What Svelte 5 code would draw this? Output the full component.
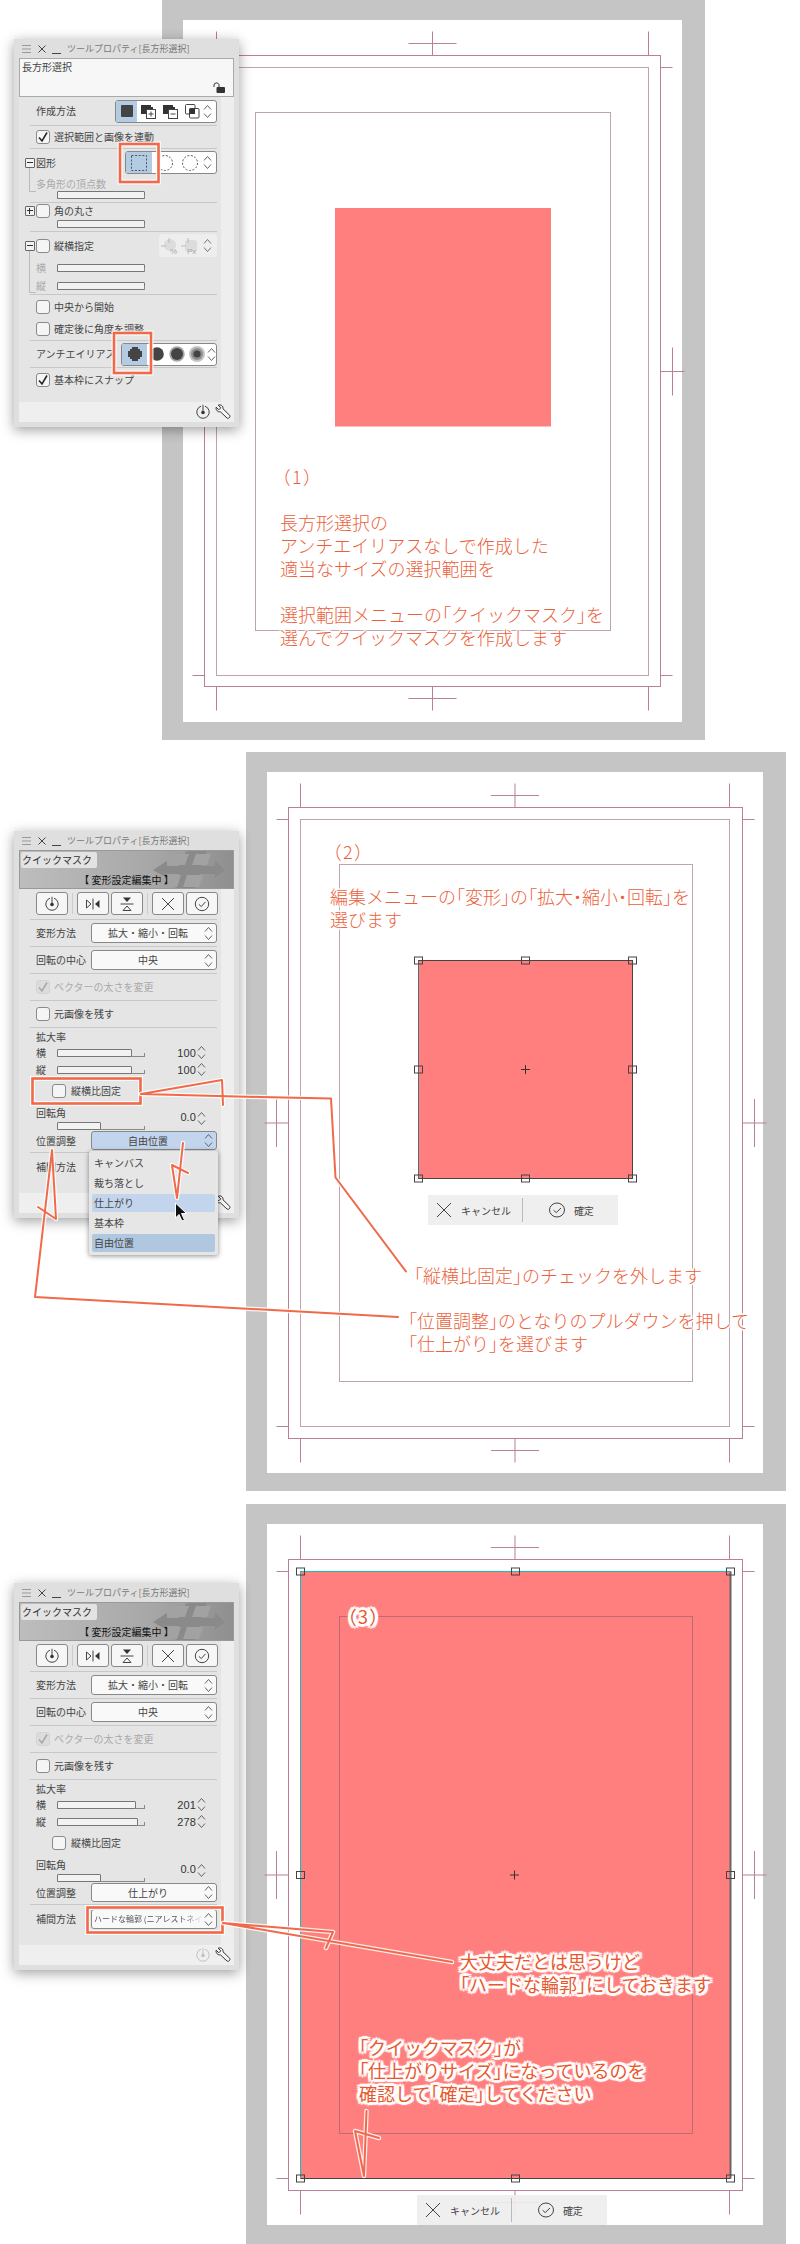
<script>
  const bar = (t) => {
    const out = [];
    for (const part of t.split(/([「」・])/)) {
      if (part) out.push({ s: part, b: /^[「」・]$/.test(part) });
    }
    return out;
  };

  function marks(o, i) {
    const cx = (i.x0 + i.x1) / 2, cy = (i.y0 + i.y1) / 2;
    const L = [];
    for (const x of [i.x0, i.x1]) {
      L.push([x, o.y0 - 24, x, o.y0], [x, o.y1, x, o.y1 + 24]);
    }
    for (const y of [i.y0, i.y1]) {
      L.push([o.x0 - 12, y, o.x0, y], [o.x1, y, o.x1 + 12, y]);
    }
    L.push([cx - 24, o.y0 - 12, cx + 24, o.y0 - 12], [cx, o.y0 - 24, cx, o.y0]);
    L.push([cx - 24, o.y1 + 12, cx + 24, o.y1 + 12], [cx, o.y1, cx, o.y1 + 24]);
    L.push([o.x0 - 12, cy - 24, o.x0 - 12, cy + 24], [o.x0 - 24, cy, o.x0, cy]);
    L.push([o.x1 + 12, cy - 24, o.x1 + 12, cy + 24], [o.x1, cy, o.x1 + 24, cy]);
    return L;
  }

  function handles(r) {
    const mx = (r.x0 + r.x1) / 2, my = (r.y0 + r.y1) / 2;
    return [[r.x0, r.y0], [mx, r.y0], [r.x1, r.y0], [r.x0, my], [r.x1, my], [r.x0, r.y1], [mx, r.y1], [r.x1, r.y1]];
  }

  const stages = [
    {
      top: 0, h: 746,
      gray: { x0: 162, y0: 0, x1: 705, y1: 740 },
      white: { x0: 183, y0: 20, x1: 682, y1: 722 },
      outer: { x0: 204.5, y0: 55.5, x1: 660.5, y1: 686.5 },
      inner: { x0: 216.5, y0: 67.5, x1: 648.5, y1: 675.5 },
      basic: { x0: 255.5, y0: 112.5, x1: 610.5, y1: 630.5 },
      pink: { x0: 335, y0: 208, x1: 551, y1: 426.5 }
    },
    {
      top: 746, h: 754,
      gray: { x0: 246, y0: 752, x1: 786, y1: 1491 },
      white: { x0: 267, y0: 772, x1: 763, y1: 1473 },
      outer: { x0: 288.5, y0: 807.5, x1: 742.5, y1: 1438.5 },
      inner: { x0: 300.5, y0: 819.5, x1: 729.5, y1: 1426.5 },
      basic: { x0: 339.5, y0: 864.5, x1: 692.5, y1: 1381.5 },
      pink: { x0: 418.5, y0: 960.5, x1: 632.5, y1: 1178.5 }
    },
    {
      top: 1500, h: 744,
      gray: { x0: 246, y0: 1504, x1: 786, y1: 2244 },
      white: { x0: 267, y0: 1524, x1: 763, y1: 2225 },
      outer: { x0: 288.5, y0: 1559.5, x1: 742.5, y1: 2190.5 },
      inner: { x0: 300.5, y0: 1571.5, x1: 729.5, y1: 2178.5 },
      basic: { x0: 339.5, y0: 1616.5, x1: 692.5, y1: 2133.5 },
      pink: { x0: 300.5, y0: 1571.5, x1: 730.5, y1: 2178.5 }
    }
  ];

  const notes = [
    [
      { x: 281, y: 476, l: ['（1）'], paren: true },
      { x: 280, y: 522, l: ['長方形選択の', 'アンチエイリアスなしで作成した', '適当なサイズの選択範囲を', ' ', '選択範囲メニューの「クイックマスク」を', '選んでクイックマスクを作成します'] }
    ],
    [
      { x: 332, y: 851.5, l: ['（2）'], paren: true },
      { x: 330, y: 896.5, l: ['編集メニューの「変形」の「拡大・縮小・回転」を', '選びます'] },
      { x: 414, y: 1275, l: ['「縦横比固定」のチェックを外します'] },
      { x: 408, y: 1320.5, l: ['「位置調整」のとなりのプルダウンを押して', '「仕上がり」を選びます'] }
    ],
    [
      { x: 347, y: 1616, l: ['（3）'], thick: true, paren: true },
      { x: 460, y: 1961, l: ['大丈夫だとは思うけど', '「ハードな輪郭」にしておきます'], thick: true },
      { x: 359, y: 2047, l: ['「クイックマスク」が', '「仕上がりサイズ」になっているのを', '確認して「確定」してください'], thick: true }
    ]
  ];

  const strokes = [
    {
      boxes: [[120, 144, 38.5, 38], [114, 333, 37, 40]],
      lines: []
    },
    {
      boxes: [[32.5, 1078.5, 108, 25]],
      lines: [
        '223,1105 222,1080 141,1094 260,1097 331,1098.5 335.5,1177.5 406,1271.5',
        '38,1207 56,1219 52,1150 35,1297 398,1317',
        '183,1143 177,1198 172,1165 188,1173'
      ]
    },
    {
      boxes: [[87.5, 1907.5, 135, 25]],
      lines: [
        '326,1948 333,1932 223,1923 452,1962',
        '366.5,2111 364,2176 355,2131 379,2138'
      ]
    }
  ];

  const tools = ['reset', 'fliph', 'flipv', 'x', 'ok'];
</script>

{#snippet spin()}
  <svg class="spin" viewBox="0 0 9 17" width="9" height="17"><path d="M1 6.5 4.5 2.5 8 6.5M1 10.5 4.5 14.5 8 10.5" /></svg>
{/snippet}

{#snippet checkbox(on, off)}
  <span class="box" class:off>
    {#if on}
      <svg viewBox="0 0 14 14" width="14" height="14"><path d="M3 7.5 6 11 11 2.5" /></svg>
    {/if}
  </span>
{/snippet}

{#snippet slider(pct)}
  <span class="slider"><span class="fill" style="width:{pct}%"></span></span>
{/snippet}

{#snippet reset(pale)}
  <svg class="icon" class:pale viewBox="0 0 16 16" width="16" height="16"><path d="M6 2.2A6.2 6.2 0 1 0 10 2.2M8 .8V8" /><circle cx="8" cy="8.5" r="1.8" class="solid" /></svg>
{/snippet}

{#snippet wrench()}
  <svg class="icon wrench" viewBox="0 0 16 16" width="16" height="16"><path d="M1.2 3.2 3.8 5.8 5.8 3.8 3.2 1.2C5.6.2 8.4 1.8 8 4.8L14.6 11.2C15.8 12.6 13.9 15.2 12 14L5.4 7.8C2.8 8.4.4 5.8 1.2 3.2Z" /></svg>
{/snippet}

{#snippet titlebar()}
  <div class="title">
    <svg viewBox="0 0 42 12" width="42" height="12"><path class="burger" d="M0 2.5H9M0 6H9M0 9.5H9" /><path class="dark" d="M16.5 2.5 23.5 9.5M23.5 2.5 16.5 9.5M30 10.5H39" /></svg>
    <span>ツールプロパティ[長方形選択]</span>
  </div>
{/snippet}

{#snippet footer(pale)}
  <div class="foot">
    {@render reset(pale)}
    {@render wrench()}
  </div>
{/snippet}

{#snippet select(text, cls)}
  <div class="select {cls}"><span class="val">{text}</span>{@render spin()}</div>
{/snippet}

{#snippet transform(sx, fx, sy, fy, pos, posClass, interp)}
  {@render titlebar()}
  <div class="banner">
    <svg class="art" viewBox="0 0 215 39" width="215" height="39" aria-hidden="true">
      <path d="M134 20 148 11V16H160L168 0H188L183 16H196V11L206 20 196 28V24H181L176 39H156L160 24H148V28Z" />
      <path class="tile" d="M155 4 170 4 166 15 150 15ZM177 4 192 4 188 15 173 15ZM147 25 162 25 158 37 143 37ZM168 25 184 25 180 37 164 37Z" />
    </svg>
    <div class="tab">クイックマスク</div>
    <div class="cap">【 変形設定編集中 】</div>
  </div>
  <div class="body">
    <div class="row line h31 tools">
      {#each tools as t, i}
        <span class="tool" class:sep={i === 1 || i === 3}>
          {#if t === 'reset'}
            {@render reset(false)}
          {:else if t === 'fliph'}
            <svg class="icon" viewBox="0 0 16 16" width="16" height="16"><path d="M1.5 4V12L6 8ZM8 2.5V13.5" /><path class="solid" d="M14.5 4V12L10 8Z" /></svg>
          {:else if t === 'flipv'}
            <svg class="icon" viewBox="0 0 16 16" width="16" height="16"><path class="solid" d="M4 1.5H12L8 6Z" /><path d="M1.5 8H14.5M4 14.5H12L8 10Z" /></svg>
          {:else if t === 'x'}
            <svg class="icon" viewBox="0 0 16 16" width="16" height="16"><path d="M2 2 14 14M14 2 2 14" /></svg>
          {:else}
            <svg class="icon" viewBox="0 0 16 16" width="16" height="16"><circle cx="8" cy="8" r="6.7" /><path d="M4.8 8.3 7.3 10.6 11.5 5.8" /></svg>
          {/if}
        </span>
      {/each}
    </div>
    <div class="row line h27"><span class="lbl w55">変形方法</span>{@render select('拡大・縮小・回転', '')}</div>
    <div class="row line h27"><span class="lbl w55">回転の中心</span>{@render select('中央', '')}</div>
    <div class="row line h27 check">{@render checkbox(true, true)}<span class="lbl dim">ベクターの太さを変更</span></div>
    <div class="row line h27 check">{@render checkbox(false, false)}<span class="lbl">元画像を残す</span></div>
    <div class="row h17"><span class="lbl">拡大率</span></div>
    <div class="row h15"><span class="lbl w21">横</span>{@render slider(sx)}<span class="num">{fx}</span>{@render spin()}</div>
    <div class="row h15 gap2"><span class="lbl w21">縦</span>{@render slider(sy)}<span class="num">{fy}</span>{@render spin()}</div>
    <div class="row h28 ratio">{@render checkbox(false, false)}<span class="lbl">縦横比固定</span></div>
    <div class="row h24 rot">
      <div class="stack"><span class="lbl">回転角</span><span class="indent">{@render slider(50)}</span></div>
      <span class="num">0.0</span>{@render spin()}
    </div>
    <div class="row line h24"><span class="lbl w55">位置調整</span>{@render select(pos, posClass)}</div>
    <div class="row h28 last"><span class="lbl w55">補間方法</span>{@render select(interp, 'tiny')}</div>
  </div>
{/snippet}

<main class="page">
  {#each stages as s, n}
    <section class="stage" style="height:{s.h}px">
      <svg class="layer" viewBox="0 {s.top} 800 {s.h}" width="800" height={s.h} aria-hidden="true">
        <rect class="gray" x={s.gray.x0} y={s.gray.y0} width={s.gray.x1 - s.gray.x0} height={s.gray.y1 - s.gray.y0} />
        <rect class="paper" x={s.white.x0} y={s.white.y0} width={s.white.x1 - s.white.x0} height={s.white.y1 - s.white.y0} />
        {#each marks(s.outer, s.inner) as m}
          <line class="crop" x1={m[0]} y1={m[1]} x2={m[2]} y2={m[3]} />
        {/each}
        <rect class="crop" x={s.outer.x0} y={s.outer.y0} width={s.outer.x1 - s.outer.x0} height={s.outer.y1 - s.outer.y0} />
        <rect class="guide" x={s.inner.x0} y={s.inner.y0} width={s.inner.x1 - s.inner.x0} height={s.inner.y1 - s.inner.y0} />
        <rect class="guide" x={s.basic.x0} y={s.basic.y0} width={s.basic.x1 - s.basic.x0} height={s.basic.y1 - s.basic.y0} />
        <rect class="pink" x={s.pink.x0} y={s.pink.y0} width={s.pink.x1 - s.pink.x0} height={s.pink.y1 - s.pink.y0} />
        {#if n === 1}
          <rect class="edge" x={s.pink.x0} y={s.pink.y0} width={s.pink.x1 - s.pink.x0} height={s.pink.y1 - s.pink.y0} />
          <line class="teal-soft" x1={s.pink.x0} y1={s.pink.y0} x2={s.pink.x0} y2={s.pink.y1} />
        {/if}
        {#if n === 2}
          <rect class="basic-on" x={s.basic.x0} y={s.basic.y0} width={s.basic.x1 - s.basic.x0} height={s.basic.y1 - s.basic.y0} />
          <path class="teal" d="M{s.pink.x0} {s.pink.y1}V{s.pink.y0}H{s.pink.x1}" />
          <path class="thickedge" d="M{s.pink.x1} {s.pink.y0}V{s.pink.y1}" />
          <path class="edge" d="M{s.pink.x0} {s.pink.y1}H{s.pink.x1}" />
        {/if}
        {#if n > 0}
          {#each handles(s.pink) as h}
            <rect class="handle" x={h[0] - 4} y={h[1] - 3.5} width="8" height="7" />
          {/each}
          <path class="plus" d="M{(s.pink.x0 + s.pink.x1) / 2 - 4.5 - (n === 2 ? 1 : 0)} {(s.pink.y0 + s.pink.y1) / 2}h9m-4.5 -4.5v9" />
        {/if}
      </svg>

      {#if n > 0}
        <div class="bar" class:low={n === 2}>
          <svg class="icon" viewBox="0 0 16 16" width="16" height="16"><path d="M1 1 15 15M15 1 1 15" /></svg>
          <span class="bar-t">キャンセル</span>
          <span class="bar-sep"></span>
          <svg class="icon" viewBox="0 0 16 16" width="16" height="16"><ellipse cx="8" cy="8" rx="7.5" ry="7" /><path d="M4.6 8.2 7.2 10.6 12 6" /></svg>
          <span class="bar-t ok">確定</span>
        </div>
      {/if}

      {#if n === 0}
        <div class="panel one">
          {@render titlebar()}
          <div class="name">
            <span>長方形選択</span>
            <svg class="lock" viewBox="0 0 12 11" width="12" height="11"><path class="lockline" d="M1 5V3A2.6 2.6 0 0 1 6 2.6V5" /><rect x="3.5" y="5" width="8.5" height="6" rx="1" /></svg>
          </div>
          <div class="body">
            <div class="row line h29">
              <span class="lbl">作成方法</span>
              <div class="seg w102">
                <span class="cell on w21"><svg viewBox="0 0 12 12" width="12" height="12"><rect class="solid" width="12" height="12" rx="1" /></svg></span>
                <span class="cell w22"><svg class="icon mini" viewBox="0 0 15 15" width="15" height="15"><path class="solid" d="M0 1h10v2H3v7H0Z" /><rect class="solid" x="3" y="3" width="9" height="7" /><rect class="plain" x="5.5" y="5.5" width="9" height="9" /><path d="M7.5 10h5M10 7.5v5" /></svg></span>
                <span class="cell w22"><svg class="icon mini" viewBox="0 0 15 15" width="15" height="15"><path class="solid" d="M0 1h10v2H3v7H0Z" /><rect class="solid" x="3" y="3" width="9" height="7" /><rect class="plain" x="5.5" y="5.5" width="9" height="9" /><path d="M7.5 10h5" /></svg></span>
                <span class="cell w22"><svg class="icon mini" viewBox="0 0 15 15" width="15" height="15"><rect class="plain" x=".5" y=".5" width="9.5" height="9.5" rx="1" /><rect class="plain" x="4.5" y="4.5" width="9.5" height="9.5" rx="1" /><rect class="solid" x="4.5" y="4.5" width="5.5" height="5.5" /></svg></span>
                {@render spin()}
              </div>
            </div>
            <div class="row line h23 check">{@render checkbox(true, false)}<span class="lbl">選択範囲と画像を連動</span></div>
            <div class="row h27 tree">
              <span class="tog minus long"></span><span class="lbl">図形</span>
              <div class="seg w92">
                <span class="cell on w26"><svg class="icon dash" viewBox="0 0 16 16" width="16" height="16"><rect x=".5" y=".5" width="15" height="15" /></svg></span>
                <span class="cell w25"><svg class="icon dash" viewBox="0 0 16 16" width="16" height="16"><circle cx="8" cy="8" r="7.5" /></svg></span>
                <span class="cell w25"><svg class="icon dash" viewBox="0 0 16 16" width="16" height="16"><circle cx="8" cy="8" r="7.5" /></svg></span>
                {@render spin()}
              </div>
            </div>
            <div class="row h14 dimrow"><span class="lbl dim">多角形の頂点数</span></div>
            <div class="row line h13 indent2">{@render slider(100)}</div>
            <div class="row h16 tree"><span class="tog plus"></span>{@render checkbox(false, false)}<span class="lbl">角の丸さ</span></div>
            <div class="row line h13 indent2">{@render slider(100)}</div>
            <div class="row h27 tree">
              <span class="tog minus long2"></span>{@render checkbox(false, false)}<span class="lbl">縦横指定</span>
              <div class="seg w58 ghost">
                <span class="cell w20"><svg viewBox="0 0 18 18" width="18" height="18"><circle class="gfill" cx="9" cy="8" r="6" /><path class="gline" d="M0 9H5M8 1V6" /><text x="9" y="16.5" class="gtext">%</text></svg></span>
                <span class="cell w20"><svg viewBox="0 0 18 18" width="18" height="18"><rect class="gfill" x="4" y="3" width="12" height="12" rx="3" /><path class="gline" d="M0 9H5M7 1V6" /><text x="6" y="16.5" class="gtext">Px</text></svg></span>
                {@render spin()}
              </div>
            </div>
            <div class="row h18"><span class="lbl dim w21">横</span>{@render slider(100)}</div>
            <div class="row line h18"><span class="lbl dim w21">縦</span>{@render slider(100)}</div>
            <div class="row h23 check">{@render checkbox(false, false)}<span class="lbl">中央から開始</span></div>
            <div class="row line h23 check">{@render checkbox(false, false)}<span class="lbl">確定後に角度を調整</span></div>
            <div class="row line h27">
              <span class="lbl">アンチエイリアス</span>
              <div class="seg w96 over">
                <span class="cell on w25"><svg viewBox="0 0 14 14" width="14" height="14"><path class="solid" d="M4 0H10V2H12V4H14V10H12V12H10V14H4V12H2V10H0V4H2V2H4Z" /></svg></span>
                <span class="cell w20"><svg viewBox="0 0 14 14" width="14" height="14"><circle class="solid" cx="7" cy="7" r="6.8" /></svg></span>
                <span class="cell w20"><svg viewBox="0 0 16 16" width="16" height="16"><circle cx="8" cy="8" r="7.7" fill="#a6a6a6" /><circle class="solid" cx="8" cy="8" r="6" /></svg></span>
                <span class="cell w20"><svg viewBox="0 0 16 16" width="16" height="16"><circle cx="8" cy="8" r="8" fill="#c4c4c4" /><circle cx="8" cy="8" r="6" fill="#8e8e8e" /><circle class="solid" cx="8" cy="8" r="3.6" /></svg></span>
                {@render spin()}
              </div>
            </div>
            <div class="row h34 check top">{@render checkbox(true, false)}<span class="lbl">基本枠にスナップ</span></div>
          </div>
          {@render footer(false)}
        </div>
      {:else if n === 1}
        <div class="panel two">
          {@render transform(85, 100, 85, 100, '自由位置', 'blue', '')}
          {@render footer(false)}
          <div class="menu">
            <div class="item">キャンバス</div>
            <div class="item">裁ち落とし</div>
            <div class="item hover">仕上がり</div>
            <div class="item">基本枠</div>
            <div class="item active">自由位置</div>
          </div>
        </div>
      {:else}
        <div class="panel three">
          {@render transform(89.5, 201, 91.5, 278, '仕上がり', '', 'ハードな輪郭 (ニアレストネイバー)')}
          {@render footer(true)}
        </div>
      {/if}

      <svg class="layer over" viewBox="0 {s.top} 800 {s.h}" width="800" height={s.h} aria-hidden="true">
        {#each strokes[n].boxes as b}
          <rect class="halo box-h" x={b[0]} y={b[1]} width={b[2]} height={b[3]} />
          <rect class="ink box-i" x={b[0]} y={b[1]} width={b[2]} height={b[3]} />
        {/each}
        {#each strokes[n].lines as p}
          <polyline class="halo" points={p} />
        {/each}
        {#each strokes[n].lines as p}
          <polyline class="ink" points={p} />
        {/each}
        {#if n === 1}
          <path class="cursor" d="M175.5 1203V1218L179 1214.5 182 1221 184.5 1220 181.5 1213.5H186.5Z" />
        {/if}
      </svg>

      {#each notes[n] as t}
        <div class="note" class:thick={t.thick} class:paren={t.paren} style="left:{t.x}px;top:{t.y - s.top - 11.5}px">
          {#each t.l as line}
            <div class="nl">{#each bar(line) as part}<span class:b={part.b}>{part.s}</span>{/each}</div>
          {/each}
        </div>
      {/each}
    </section>
  {/each}
</main>

<style>
  :global(body) { margin: 0; background: #fff; }
  .page { width: 800px; font-family: "Noto Sans CJK JP", "Noto Sans", sans-serif; }
  .stage { position: relative; width: 800px; overflow: hidden; }
  .layer { position: absolute; left: 0; top: 0; display: block; }
  .layer.over { z-index: 3; }

  .gray { fill: #c5c5c5; }
  .paper { fill: #fff; }
  .crop { fill: none; stroke: #bb7f98; stroke-width: 1; }
  .guide { fill: none; stroke: #bfa3b0; stroke-width: 1; }
  .pink { fill: #ff7f7f; }
  .edge { fill: none; stroke: #444; stroke-width: 1; }
  .teal-soft { stroke: #4d7078; }
  .teal { fill: none; stroke: #16bcc0; stroke-width: 1; }
  .thickedge { fill: none; stroke: #666; stroke-width: 2; }
  .basic-on { fill: none; stroke: #bd6a72; stroke-width: 1; }
  .handle { fill: none; stroke: #444; stroke-width: 1; }
  .plus { fill: none; stroke: #333; stroke-width: 1; }

  .halo { fill: none; stroke: #fff; stroke-width: 4.5; stroke-linejoin: round; stroke-linecap: round; opacity: .85; }
  .ink { fill: none; stroke: #f0694a; stroke-width: 2; stroke-linejoin: round; stroke-linecap: round; }
  .box-h { stroke-width: 5; stroke-linejoin: miter; }
  .box-i { stroke-width: 2.6; stroke-linejoin: miter; }
  .cursor { fill: #111; stroke: #fff; stroke-width: 1; }

  .note {
    position: absolute;
    z-index: 4;
    color: #ec5f3c;
    font-size: 18px;
    font-weight: 300;
    line-height: 23px;
    white-space: pre;
    text-shadow: 1px 0 1px #fff, -1px 0 1px #fff, 0 1px 1px #fff, 0 -1px 1px #fff, 2px 0 1px #fff, -2px 0 1px #fff, 0 2px 1px #fff, 0 -2px 1px #fff;
  }
  .note.thick {
    color: #e8582f;
    font-weight: 400;
    text-shadow: 2px 0 1px #fff, -2px 0 1px #fff, 0 2px 1px #fff, 0 -2px 1px #fff, 2px 2px 1px #fff, -2px 2px 1px #fff, 2px -2px 1px #fff, -2px -2px 1px #fff, 3px 0 1px #fff, -3px 0 1px #fff, 0 3px 1px #fff, 0 -3px 1px #fff, 3px 2px 1px #fff, -3px 2px 1px #fff, 3px -2px 1px #fff, -3px -2px 1px #fff;
  }
  .note.paren { font-feature-settings: "palt"; letter-spacing: 2px; }
  .nl { height: 23px; }
  .b { font-feature-settings: "palt"; }

  .bar {
    position: absolute;
    z-index: 2;
    left: 428px;
    top: 449px;
    width: 190px;
    height: 30px;
    box-sizing: border-box;
    background: rgba(238, 238, 238, .93);
    display: flex;
    align-items: center;
    padding-left: 8px;
    color: #444;
    font-size: 10px;
  }
  .bar.low { left: 417px; top: 695px; }
  .bar-t { margin-left: 9px; width: 50px; white-space: nowrap; }
  .bar-sep { width: 1px; height: 24px; background: #bbb; margin: 0 26px 0 11px; }
  .bar-t.ok { margin-left: 9px; }

  .panel {
    position: absolute;
    z-index: 1;
    left: 14px;
    width: 225px;
    box-sizing: border-box;
    padding: 0 5px 5px;
    background: #dfdfdf;
    box-shadow: 0 3px 12px rgba(0, 0, 0, .38);
    color: #333;
    font-size: 10px;
    line-height: 14px;
  }
  .panel.one { top: 39px; }
  .panel.two { top: 85px; }
  .panel.three { top: 83px; }

  .title { height: 19px; display: flex; align-items: center; gap: 3px; margin: 0 -5px; padding-left: 8px; color: #777; font-size: 9px; white-space: nowrap; }
  .title svg { fill: none; flex: none; }
  .burger { stroke: #999; }
  .dark { stroke: #444; }

  .name { height: 39px; box-sizing: border-box; border: 1px solid #aaa; background: #f7f7f7; padding: 1px 2px; display: flex; flex-direction: column; color: #444; }
  .lock { align-self: flex-end; margin-top: auto; margin-right: 6px; margin-bottom: 2px; fill: #333; }
  .lockline { fill: none; stroke: #333; stroke-width: 1; }

  .banner { position: relative; height: 39px; box-sizing: border-box; border: 1px solid #999; background: linear-gradient(90deg, #bdbdbd, #a8a8a8 60%, #8f8f8f); display: flex; flex-direction: column; justify-content: space-between; overflow: hidden; color: #111; }
  .art { position: absolute; left: -1px; top: -1px; fill: #8a8a8a; }
  .art .tile { fill: #a2a2a2; }
  .tab { position: relative; width: 76px; height: 16px; margin: 1px 0 0 1px; padding-left: 1px; box-sizing: border-box; background: #e3e3e3; border-radius: 2px; font-size: 10px; line-height: 15px; color: #333; white-space: nowrap; }
  .cap { position: relative; text-align: center; font-size: 10px; line-height: 12px; margin-bottom: 2px; }

  .body { padding: 0 17px 0 11px; background: linear-gradient(90deg, #e5e5e5 202px, #eeeeee 202px); }
  .row { display: flex; align-items: center; box-sizing: border-box; padding-left: 6px; white-space: nowrap; }
  .line { border-bottom: 1px solid #c8c8c8; }
  .h13 { height: 13px; } .h14 { height: 14px; } .h15 { height: 15px; } .h16 { height: 16px; } .h17 { height: 17px; } .h18 { height: 18px; }
  .h23 { height: 23px; } .h24 { height: 24px; } .h27 { height: 27px; } .h28 { height: 28px; } .h29 { height: 29px; } .h31 { height: 31px; } .h34 { height: 34px; }
  .top { align-items: flex-start; padding-top: 5px; }
  .gap2 { margin-top: 2px; }
  .last { height: 40px; padding-bottom: 12px; }
  .indent2 { padding-left: 27px; align-items: flex-start; padding-top: 1px; }
  .dimrow { padding-top: 2px; }

  .lbl { color: #444; line-height: 14px; flex: none; }
  .dim { color: #aaa; }
  .w21 { width: 21px; } .w55 { width: 55px; }
  .check .lbl, .tree .box + .lbl { margin-left: 4px; }
  .check .dim { margin-left: 4px; }

  .box { width: 14px; height: 14px; box-sizing: border-box; flex: none; border: 1px solid #8a8a8a; border-radius: 3px; background: #f5f5f5; display: block; position: relative; }
  .box svg { position: absolute; left: -1px; top: -1px; fill: none; stroke: #222; stroke-width: 1.5; }
  .box.off { background: #dcdcdc; border-color: #d4d4d4; }
  .box.off svg { stroke: #a8a8a8; }

  .tree { padding-left: 0; }
  .tog { position: relative; width: 10px; height: 10px; box-sizing: border-box; border: 1px solid #666; border-radius: 1px; background: #f2f2f2; margin: 0 1px 0 -5px; flex: none; }
  .tog::before { content: ""; position: absolute; left: 1px; right: 1px; top: 3px; height: 1px; background: #333; }
  .plus.tog::after { content: ""; position: absolute; top: 1px; bottom: 1px; left: 3px; width: 1px; background: #333; }
  .long::after, .long2::after { content: ""; position: absolute; left: 3px; top: 9px; width: 6px; height: 23px; border-left: 1px solid #bbb; border-bottom: 1px solid #bbb; }
  .long2::after { height: 41px; }

  .slider { position: relative; display: block; width: 88px; height: 7px; border-bottom: 1px solid #888; flex: none; }
  .slider::after { content: ""; position: absolute; right: 0; bottom: 0; height: 3px; border-right: 1px solid #888; }
  .fill { display: block; box-sizing: border-box; height: 8px; background: #f2f2f2; border: 1px solid #777; border-radius: 1px; }
  .stack { display: flex; flex-direction: column; width: 120px; margin-right: 0; }
  .indent { margin: 2px 0 0 21px; }
  .num { margin-left: auto; font-family: "Liberation Sans", sans-serif; font-size: 11px; color: #333; letter-spacing: .1px; }
  .spin { flex: none; fill: none; stroke: #555; stroke-width: .9; }
  .row > .spin { margin: 0 11px 0 1px; }
  .rot { align-items: flex-start; padding-top: 1px; }
  .rot .num, .rot .spin { margin-top: 4px; }

  .seg { margin-left: auto; height: 23px; box-sizing: border-box; display: flex; align-items: stretch; background: #fff; border: 1px solid #888; border-radius: 3px; overflow: hidden; }
  .seg.over { position: relative; }
  .w102 { width: 102px; } .w92 { width: 92px; } .w96 { width: 96px; } .w58 { width: 58px; }
  .seg .spin { align-self: center; margin-left: auto; margin-right: 4px; }
  .cell { display: flex; align-items: center; justify-content: center; flex: none; }
  .cell.on { background: #b4cbe4; }
  .w20 { width: 20px; } .w22 { width: 22px; } .w25 { width: 25px; } .w26 { width: 26px; }
  .cell.w21 { width: 21px; }
  .seg.ghost { background: #eeeeee; border-color: #eeeeee; }
  .ghost .spin { stroke: #666; }
  .gfill { fill: #dcdcdc; }
  .gline { fill: none; stroke: #bbb; }
  .gtext { font-size: 8px; fill: #aaa; font-family: "Liberation Sans", sans-serif; }
  .solid { fill: #444; stroke: none; }
  .plain { fill: #fff; stroke: #444; }
  .icon { flex: none; fill: none; stroke: #444; stroke-width: 1; }
  .icon .solid { fill: #333; stroke: none; }
  .icon.pale { stroke: #c2c2c2; }
  .icon.pale .solid { fill: #c2c2c2; }
  .dash { stroke-dasharray: 2 1.6; stroke: #555; }
  .wrench { stroke: #333; fill: #f5f5f5; }

  .tools { padding-left: 6px; gap: 2.5px; }
  .tool { width: 31.5px; height: 23px; box-sizing: border-box; margin-bottom: 1px; border: 1px solid #888; border-radius: 3px; background: #f6f6f6; display: flex; align-items: center; justify-content: center; flex: none; }
  .tool.sep { margin-left: 7px; position: relative; }
  .tool.sep::before { content: ""; position: absolute; left: -6px; top: 0; bottom: 0; width: 1px; background: #cdcdcd; }

  .select { flex: 1; min-width: 0; height: 19.5px; box-sizing: border-box; display: flex; align-items: center; background: #f9f9f9; border: 1px solid #888; border-radius: 3px; color: #444; }
  .val { flex: 1; min-width: 0; text-align: center; overflow: hidden; }
  .select .spin { margin: 0 3px 0 0; }
  .select.blue { background: #c3d5ec; }
  .select.tiny .val { text-align: left; padding-left: 2px; font-size: 8px; color: #555; -webkit-mask-image: linear-gradient(90deg, #000 80%, transparent); mask-image: linear-gradient(90deg, #000 80%, transparent); }

  .ratio { padding-left: 22px; }
  .ratio .lbl { margin-left: 5px; }

  .foot { height: 20px; background: #efefef; display: flex; align-items: center; justify-content: flex-end; gap: 4px; padding-right: 3px; }

  .menu {
    position: absolute;
    z-index: 2;
    left: 75px;
    top: 320px;
    width: 129px;
    height: 104px;
    box-sizing: border-box;
    padding: 3px;
    background: #e6e6e6;
    border-radius: 2px;
    box-shadow: 0 1px 5px rgba(0, 0, 0, .45);
    display: flex;
    flex-direction: column;
    gap: 2px;
  }
  .item { height: 18px; border-radius: 2px; line-height: 18px; padding-left: 2px; color: #444; }
  .hover { background: #c3d5ec; }
  .active { background: #afc8e0; }
</style>
